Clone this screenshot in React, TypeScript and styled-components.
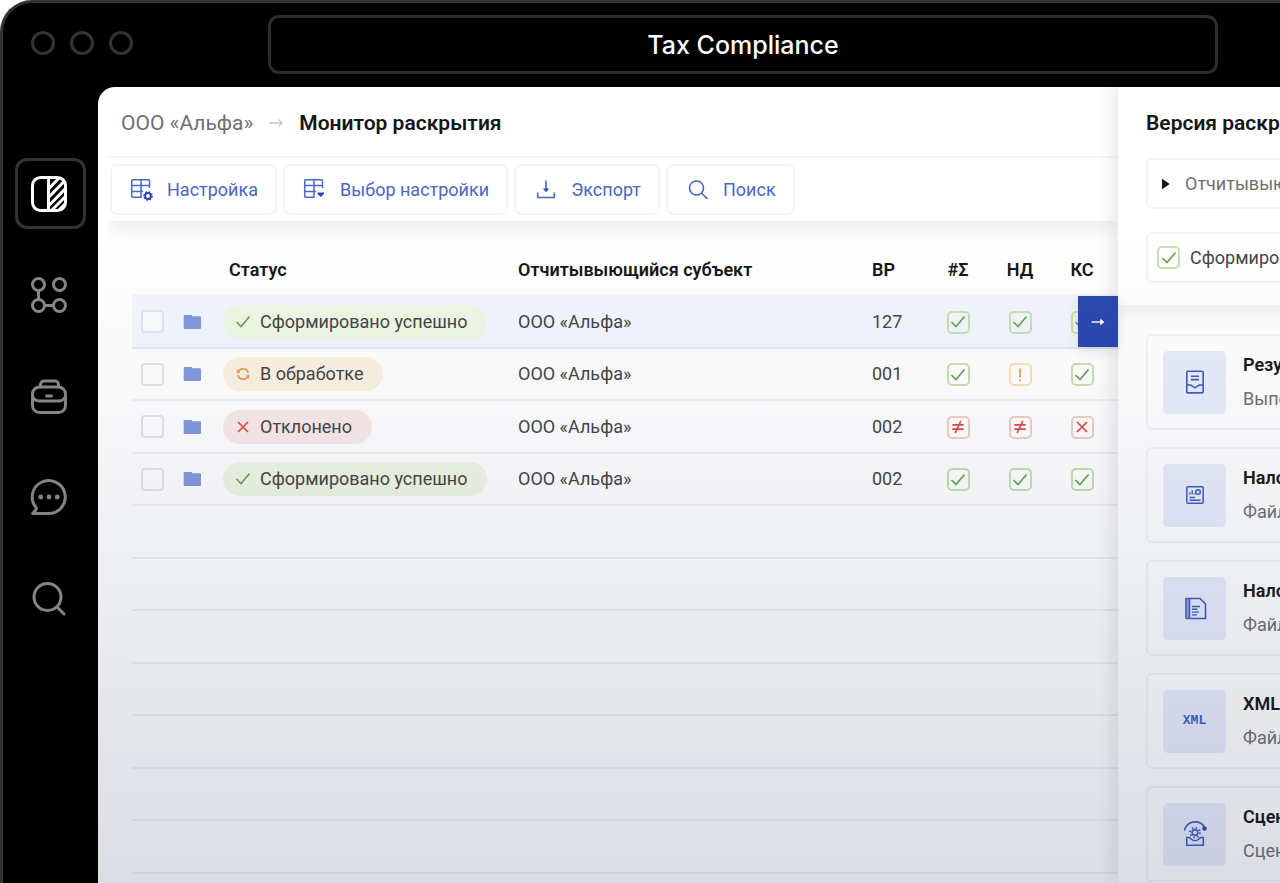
import React from 'react';
import styled, { createGlobalStyle } from 'styled-components';

const GlobalStyle = createGlobalStyle`
  *, *::before, *::after { box-sizing: border-box; }
  html, body { margin: 0; background: #fff; }
  body { font-family: Roboto, "Noto Sans", sans-serif; font-size: 18px; line-height: 24px; color: #161616; }
  button, input { font: inherit; margin: 0; }
  svg { display: block; }
`;

/* ---------- Window frame ---------- */

const Frame = styled.div`
  display: grid;
  grid-template-rows: auto minmax(0, 1fr);
  height: 100vh;
  overflow: hidden;
  background: #000;
  border: solid #333;
  border-width: 3px 0 0 3px;
  border-top-left-radius: 32px;
`;

const TitleBar = styled.header`
  display: flex;
  align-items: center;
  padding: 12px 62px 13px 28px;
`;

const WindowDots = styled.div`
  display: flex;
  gap: 15px;
  width: 237px;
  padding-bottom: 3px;
`;

const Dot = styled.span`
  width: 24px;
  height: 24px;
  border: 3px solid #333;
  border-radius: 50%;
`;

const AppTitle = styled.h1`
  flex: 1;
  margin: 0;
  height: 59px;
  display: flex;
  align-items: center;
  justify-content: center;
  border: 3px solid #2d2d2d;
  border-radius: 11px;
  font: 500 25px/32px Inter, sans-serif;
  color: #fff;
`;

const Body = styled.div`
  display: flex;
  min-height: 0;
`;

const SideNav = styled.nav`
  flex: none;
  display: flex;
  flex-direction: column;
  align-items: center;
  gap: 30px;
  width: 95px;
  padding-top: 71px;
`;

const NavButton = styled.button<{ $active?: boolean }>`
  display: grid;
  place-items: center;
  width: 71px;
  height: 71px;
  padding: 0 3px 0 0;
  border: 3px solid ${p => (p.$active ? '#333' : 'transparent')};
  border-radius: 12px;
  background: none;
  color: ${p => (p.$active ? '#fff' : '#858585')};
`;

const Screen = styled.div`
  position: relative;
  flex: 1;
  display: flex;
  min-width: 0;
  overflow: hidden;
  border-top-left-radius: 17px;
  background: #fff;
  &::after {
    content: '';
    position: absolute;
    inset: 0;
    z-index: 5;
    pointer-events: none;
    background: linear-gradient(rgba(30, 45, 85, 0) 18%, rgba(30, 45, 85, 0.035) 40%, rgba(30, 45, 85, 0.16));
  }
`;

/* ---------- Monitor ---------- */

const Main = styled.main`
  flex: 1;
  min-width: 0;
  display: flex;
  flex-direction: column;
`;

const MonitorHead = styled.div`
  margin-left: 10px;
  box-shadow: 0 8px 18px rgba(0, 0, 0, 0.08);
  clip-path: inset(0 0 -40px 0);
`;

const Crumbs = styled.div`
  display: flex;
  align-items: center;
  gap: 16px;
  height: 71px;
  padding: 2px 0 0 13px;
  border-bottom: 2px solid #f6f6f7;
  font-size: 21px;
`;

const CrumbLink = styled.a`
  color: #6f6f6f;
  text-decoration: none;
`;

const Heading = styled.h2`
  margin: 0;
  font-size: 21px;
  line-height: 24px;
  font-weight: 600;
  white-space: nowrap;
`;

const Toolbar = styled.div`
  display: flex;
  gap: 6px;
  padding: 6px 2px;
`;

const ToolButton = styled.button`
  display: flex;
  align-items: center;
  gap: 13px;
  height: 51px;
  padding: 0 17px 0 18px;
  border: 2px solid #f5f5f6;
  border-radius: 7px;
  background: #fff;
  color: #4a67c2;
  white-space: nowrap;
`;

const TableArea = styled.div`
  padding: 24px 0 0 34px;
`;

const Table = styled.table`
  width: 100%;
  table-layout: fixed;
  border-collapse: separate;
  border-spacing: 0;
`;

const Col = styled.col<{ $w?: number }>`
  width: ${p => (p.$w ? `${p.$w}px` : 'auto')};
`;

const Th = styled.th<{ $center?: boolean; $indent?: boolean }>`
  height: 51px;
  padding: 0 0 0 ${p => (p.$indent ? 6 : 0)}px;
  text-align: ${p => (p.$center ? 'center' : 'left')};
  font-weight: 600;
  white-space: nowrap;
  border-bottom: 2px solid #f6f6f8;
`;

const Row = styled.tr<{ $selected?: boolean }>`
  height: 52px;
  &:nth-child(odd) { height: 53px; }
  background: ${p => (p.$selected ? '#f3f6ff' : 'transparent')};
`;

const Td = styled.td<{ $center?: boolean }>`
  position: relative;
  height: inherit;
  padding: 0;
  text-align: ${p => (p.$center ? 'center' : 'left')};
  color: #454545;
  white-space: nowrap;
  border-bottom: 2px solid rgba(110, 115, 135, 0.1);
`;

const Check = styled.input`
  appearance: none;
  display: block;
  width: 23px;
  height: 23px;
  margin-left: 9px;
  border: 2px solid #e3e4e9;
  border-radius: 4px;
  background: rgba(255, 255, 255, 0.6);
`;

const tones = {
  ok: { pill: '#eff7e4', box: '#c6e2ae', ink: '#65a557' },
  work: { pill: '#fcf2e2', box: '#fae0b8', ink: '#e79c50' },
  bad: { pill: '#f9eae8', box: '#f5ccc2', ink: '#df4b45' },
};
type Tone = keyof typeof tones;

const Pill = styled.span<{ $tone: Tone }>`
  display: inline-flex;
  align-items: center;
  gap: 9px;
  height: 34px;
  padding: 0 20px 0 12px;
  border-radius: 17px;
  background: ${p => tones[p.$tone].pill};
  vertical-align: middle;
  svg { color: ${p => tones[p.$tone].ink}; }
`;

const Mark = styled.span<{ $tone: Tone }>`
  display: inline-grid;
  place-items: center;
  width: 23px;
  height: 23px;
  border: 2px solid ${p => tones[p.$tone].box};
  border-radius: 5px;
  color: ${p => tones[p.$tone].ink};
  vertical-align: middle;
`;

const OpenRow = styled.button`
  position: absolute;
  top: 0;
  right: 0;
  z-index: 3;
  display: grid;
  place-items: center;
  width: 40px;
  height: 51px;
  padding: 0;
  border: 0;
  background: #2a48b0;
  color: #fff;
  box-shadow: 0 4px 12px rgba(0, 0, 0, 0.1);
`;

/* ---------- Version drawer ---------- */

const Drawer = styled.aside`
  position: relative;
  z-index: 2;
  flex: none;
  width: 162px;
  background: #fff;
  box-shadow: -4px 0 18px rgba(0, 0, 0, 0.11);
`;

const DrawerClip = styled.div`
  height: 100%;
  overflow: hidden;
`;

const DrawerContent = styled.div`
  width: 420px;
`;

const DrawerHead = styled.div`
  display: grid;
  gap: 23px;
  padding: 24px 24px 22px 28px;
  box-shadow: 0 6px 20px rgba(0, 0, 0, 0.08);
`;

const Field = styled.div`
  display: flex;
  align-items: center;
  gap: 10px;
  height: 51px;
  padding: 0 9px;
  border: 2px solid #f5f5f6;
  border-radius: 6px;
  color: #454545;
  white-space: nowrap;
`;

const Disclosure = styled.button`
  display: flex;
  align-items: center;
  gap: 14px;
  height: 51px;
  padding: 0 12px;
  border: 2px solid #f5f5f6;
  border-radius: 6px;
  background: #fff;
  color: #6f6f6f;
  white-space: nowrap;
  svg { color: #161616; }
`;

const Cards = styled.div`
  display: grid;
  gap: 17px;
  padding: 29px 24px 24px 28px;
`;

const Card = styled.article`
  display: flex;
  align-items: center;
  gap: 17px;
  height: 96px;
  padding: 0 15px;
  border: 2px solid #f4f4f6;
  border-radius: 6px;
`;

const Tile = styled.div`
  display: grid;
  place-items: center;
  width: 63px;
  height: 63px;
  border-radius: 5px;
  background: #e8edfb;
  color: #3f5dc0;
`;

const XmlMark = styled.span`
  font: 700 13px/16px "Liberation Mono", monospace;
`;

const CardTitle = styled.h3`
  margin: 0 0 10px;
  font-size: 18px;
  line-height: 24px;
  font-weight: 600;
`;

const CardText = styled.p`
  margin: 0;
  color: #6f6f6f;
`;

/* ---------- Icons ---------- */

const line = { fill: 'none', stroke: 'currentColor' } as const;

const PanelIcon = () => (
  <svg width="38" height="38" viewBox="0 0 38 38" {...line} strokeWidth="3">
    <rect x="2.5" y="2.5" width="33" height="33" rx="8" />
    <path d="M18.5 2v34" />
    <path d="M19 13.5 29 3M19 22 34 6.500M19 30.500 35 14M22 35 35 22M29 35l6-6" />
  </svg>
);
const NodesIcon = () => (
  <svg width="38" height="38" viewBox="0 0 38 38" {...line} strokeWidth="3">
    <circle cx="8.500" cy="8.500" r="6" /><circle cx="29.500" cy="8.500" r="6" />
    <circle cx="8.500" cy="29.500" r="6" /><circle cx="29.500" cy="29.500" r="6" />
    <path d="M8.500 14.500v9M14.500 29.500h9" />
  </svg>
);
const CaseIcon = () => (
  <svg width="38" height="38" viewBox="0 0 38 38" {...line} strokeWidth="3" strokeLinecap="round">
    <path d="M10.500 10V7.500a3.500 3.500 0 0 1 3.500-3.500h11a3.500 3.500 0 0 1 3.500 3.500V10" />
    <rect x="2.500" y="10" width="33" height="25.500" rx="7" />
    <path d="M2.500 17.500a6 6 0 0 0 6 6.500h21a6 6 0 0 0 6-6.500M16.500 19h5" />
  </svg>
);
const ChatIcon = () => (
  <svg width="38" height="38" viewBox="0 0 38 38" {...line} strokeWidth="3" strokeLinejoin="round">
    <path d="M19 35.500A16.500 16.500 0 1 0 6 29.500c.6.800.4 1.600-.2 2.400L2.700 35.500Z" />
    <g fill="currentColor" stroke="none"><circle cx="10.700" cy="19" r="2.400" /><circle cx="19" cy="19" r="2.400" /><circle cx="27.300" cy="19" r="2.400" /></g>
  </svg>
);
const BigSearchIcon = () => (
  <svg width="38" height="38" viewBox="0 0 38 38" {...line} strokeWidth="3" strokeLinecap="round">
    <circle cx="17.500" cy="18" r="13.500" /><path d="m27 28 7 7" />
  </svg>
);
const CrumbArrow = () => (
  <svg width="14" height="10" viewBox="0 0 14 10" {...line} stroke="#c6c6c6" strokeWidth="1.300"><path d="M0 5h13M9.500 1.500 13 5 9.500 8.500" /></svg>
);
const GridBase = () => <path d="M19.500 10V2.700a1 1 0 0 0-1-1H2.700a1 1 0 0 0-1 1v15.600a1 1 0 0 0 1 1H11V1.700M1.700 7.500h17.800M1.700 13.400H13" />;
const GridGearIcon = () => (
  <svg width="24" height="24" viewBox="0 0 24 24" {...line} strokeWidth="1.500">
    <GridBase />
    <circle cx="18" cy="18" r="2.900" stroke="#2a48b0" strokeWidth="2" />
    <circle cx="18" cy="18" r="4.200" stroke="#2a48b0" strokeWidth="1.300" strokeDasharray="1.700 1.600" />
  </svg>
);
const GridDropIcon = () => (
  <svg width="24" height="24" viewBox="0 0 24 24" {...line} strokeWidth="1.500">
    <GridBase />
    <path d="M14.500 14.500h6.500v1.500L17.800 19l-3.300-3Z" fill="#2a48b0" stroke="none" />
  </svg>
);
const ExportIcon = () => (
  <svg width="24" height="24" viewBox="0 0 24 24" {...line} strokeWidth="1.600">
    <path d="M3.700 14.500v5h16.600v-5M12 2.500v10" /><path d="M8.800 10.500h6.400L12 14.300Z" fill="#2a48b0" stroke="none" />
  </svg>
);
const SearchIcon = () => (
  <svg width="24" height="24" viewBox="0 0 24 24" {...line} strokeWidth="1.600"><circle cx="10.500" cy="10" r="7" /><path d="m15.500 15 6 6" /></svg>
);
const FolderIcon = () => (
  <svg width="19" height="16" viewBox="0 0 19 16"><path d="M1.500 1h6.700l1.600 1.300h7.400A.8.8 0 0 1 18 3v11a1 1 0 0 1-1 1H1.500a.8.800 0 0 1-.8-.8V1.800a.8.800 0 0 1 .8-.8Z" fill="#8299de" /></svg>
);
const TickIcon = () => (
  <svg width="16" height="16" viewBox="0 0 16 16" {...line} strokeWidth="1.700"><path d="m1.500 8 4.500 4.500 8.500-10" /></svg>
);
const SyncIcon = () => (
  <svg width="16" height="16" viewBox="0 0 16 16" {...line} strokeWidth="1.700">
    <path d="M3 6.200A5.400 5.400 0 0 1 13.200 7M13 9.800A5.400 5.400 0 0 1 2.800 9" />
    <path d="M1.800 3v4.600l3.600-1.400ZM14.200 13V8.400l-3.600 1.400Z" fill="currentColor" stroke="none" />
  </svg>
);
const CrossIcon = () => (
  <svg width="16" height="16" viewBox="0 0 16 16" {...line} strokeWidth="1.700"><path d="m3 3 10 10M13 3 3 13" /></svg>
);
const NotEqualIcon = () => (
  <svg width="16" height="16" viewBox="0 0 16 16" {...line} strokeWidth="1.700"><path d="M2.300 5.800h11.400M2.300 10.200h11.400M10.800 2 5.200 14" /></svg>
);
const AlertIcon = () => (
  <svg width="16" height="16" viewBox="0 0 16 16" {...line} strokeWidth="1.700"><path d="M8 1.500v9M8 12.300v2" /></svg>
);
const GoArrow = () => (
  <svg width="14" height="10" viewBox="0 0 14 10" {...line} strokeWidth="1.400"><path d="M.5 5h11" /><path d="M9.300 1.500 13.300 5l-4 3.500V5Z" fill="currentColor" stroke="none" /></svg>
);
const PlayIcon = () => (
  <svg width="11" height="12" viewBox="0 0 11 12"><path d="M2 .8 9.800 6 2 11.200Z" fill="currentColor" /></svg>
);
const ReportIcon = () => (
  <svg width="24" height="26" viewBox="0 0 24 26" {...line} strokeWidth="1.600">
    <rect x="3.800" y="2.300" width="16.400" height="21.600" rx="1" />
    <path d="M8 7.300h8M8 10.600h8M4 16h3.500c1.500 0 2 2.600 4.500 2.600s3-2.600 4.500-2.600H20" />
  </svg>
);
const ChartDocIcon = () => (
  <svg width="24" height="24" viewBox="0 0 24 24" {...line} strokeWidth="1.500">
    <rect x="3.800" y="3.800" width="16.400" height="16.400" rx="1" /><circle cx="15" cy="9" r="2.300" />
    <path d="M6.800 11.500V9.500M9.300 11.500V7.500M12 11.500v-1.500M6.500 14.500h5.500M6.500 17.300h11" />
  </svg>
);
const FileIcon = () => (
  <svg width="24" height="24" viewBox="0 0 24 24" {...line} strokeWidth="1.600">
    <path d="M3 2.500h14l5.500 5.500v14.500H3.800a.8.800 0 0 1-.8-.8Z" /><path d="M4 3h2.500v19H4Z" fill="currentColor" fillOpacity=".5" stroke="none" /><path d="M6.500 2.500v20" />
    <path d="M9 10.500h8M9 13.300h5.500M9 16.100h7M9 18.900h5" strokeWidth="1.400" />
  </svg>
);
const ScenarioIcon = () => (
  <svg width="26" height="26" viewBox="0 0 26 26" {...line} strokeWidth="1.600">
    <path d="M2.500 9.500a11 11 0 0 1 20-3.500" /><circle cx="22.500" cy="7.500" r="2.200" fill="#2a48b0" stroke="none" />
    <circle cx="13" cy="11.500" r="2.900" /><circle cx="13" cy="11.500" r="5" strokeWidth="1.800" strokeDasharray="1.500 2.430" />
    <path d="M7 16.500H4.700v7.700h16.600v-7.700H19c-1.500 0-2 3.200-6 3.200s-4.500-3.200-6-3.200Z" />
  </svg>
);

/* ---------- Data ---------- */

const markIcons = { tick: <TickIcon />, cross: <CrossIcon />, neq: <NotEqualIcon />, alert: <AlertIcon /> };
const markTone: Record<keyof typeof markIcons, Tone> = { tick: 'ok', cross: 'bad', neq: 'bad', alert: 'work' };
const pillIcons: Record<Tone, React.ReactNode> = { ok: <TickIcon />, work: <SyncIcon />, bad: <CrossIcon /> };

type Entry = { status: string; tone: Tone; code: string; marks: (keyof typeof markIcons)[] };

const entries: Entry[] = [
  { status: 'Сформировано успешно', tone: 'ok', code: '127', marks: ['tick', 'tick', 'tick'] },
  { status: 'В обработке', tone: 'work', code: '001', marks: ['tick', 'alert', 'tick'] },
  { status: 'Отклонено', tone: 'bad', code: '002', marks: ['neq', 'neq', 'cross'] },
  { status: 'Сформировано успешно', tone: 'ok', code: '002', marks: ['tick', 'tick', 'tick'] },
];
const blankRows = Array.from({ length: 8 }, (_, i) => i);

const navItems = [
  { label: 'Панель', icon: <PanelIcon /> },
  { label: 'Процессы', icon: <NodesIcon /> },
  { label: 'Портфель', icon: <CaseIcon /> },
  { label: 'Сообщения', icon: <ChatIcon /> },
  { label: 'Поиск', icon: <BigSearchIcon /> },
];

const tools = [
  { label: 'Настройка', icon: <GridGearIcon /> },
  { label: 'Выбор настройки', icon: <GridDropIcon /> },
  { label: 'Экспорт', icon: <ExportIcon /> },
  { label: 'Поиск', icon: <SearchIcon /> },
];

const cards = [
  { title: 'Результат', text: 'Выполнено', icon: <ReportIcon /> },
  { title: 'Налоговый', text: 'Файл', icon: <ChartDocIcon /> },
  { title: 'Налоговая', text: 'Файл', icon: <FileIcon /> },
  { title: 'XML-файл', text: 'Файл', icon: <XmlMark>XML</XmlMark> },
  { title: 'Сценарий', text: 'Сценарий', icon: <ScenarioIcon /> },
];

export default function App() {
  return (
    <>
      <GlobalStyle />
      <Frame>
        <TitleBar>
          <WindowDots><Dot /><Dot /><Dot /></WindowDots>
          <AppTitle>Tax Compliance</AppTitle>
        </TitleBar>
        <Body>
          <SideNav>
            {navItems.map((item, i) => (
              <NavButton key={item.label} $active={i === 0} aria-label={item.label}>{item.icon}</NavButton>
            ))}
          </SideNav>
          <Screen>
            <Main>
              <MonitorHead>
                <Crumbs>
                  <CrumbLink href="#alpha">ООО «Альфа»</CrumbLink>
                  <CrumbArrow />
                  <Heading>Монитор раскрытия</Heading>
                </Crumbs>
                <Toolbar>
                  {tools.map(t => <ToolButton key={t.label}>{t.icon}{t.label}</ToolButton>)}
                </Toolbar>
              </MonitorHead>
              <TableArea>
                <Table>
                  <colgroup>
                    <Col $w={51} /><Col $w={40} /><Col $w={295} /><Col /><Col $w={55} /><Col $w={62} /><Col $w={62} /><Col $w={62} /><Col $w={5} />
                  </colgroup>
                  <thead>
                    <tr>
                      <Th /><Th />
                      <Th $indent>Статус</Th>
                      <Th>Отчитывыющийся субъект</Th>
                      <Th>ВР</Th>
                      <Th $center>#Σ</Th>
                      <Th $center>НД</Th>
                      <Th $center>КС</Th>
                      <Th />
                    </tr>
                  </thead>
                  <tbody>
                    {entries.map((e, i) => (
                      <Row key={i} $selected={i === 0}>
                        <Td><Check type="checkbox" aria-label={`Выбрать строку ${i + 1}`} /></Td>
                        <Td><FolderIcon /></Td>
                        <Td><Pill $tone={e.tone}>{pillIcons[e.tone]}{e.status}</Pill></Td>
                        <Td>ООО «Альфа»</Td>
                        <Td>{e.code}</Td>
                        {e.marks.map((m, k) => <Td key={k} $center><Mark $tone={markTone[m]}>{markIcons[m]}</Mark></Td>)}
                        <Td>{i === 0 && <OpenRow aria-label="Открыть"><GoArrow /></OpenRow>}</Td>
                      </Row>
                    ))}
                    {blankRows.map(i => <Row key={`blank-${i}`}><Td colSpan={9} /></Row>)}
                  </tbody>
                </Table>
              </TableArea>
            </Main>
            <Drawer>
              <DrawerClip>
                <DrawerContent>
                  <DrawerHead>
                    <Heading>Версия раскрытия</Heading>
                    <Disclosure><PlayIcon />Отчитывыющийся субъект</Disclosure>
                    <Field><Mark $tone="ok"><TickIcon /></Mark>Сформировано успешно</Field>
                  </DrawerHead>
                  <Cards>
                    {cards.map((c, i) => (
                      <Card key={i}>
                        <Tile>{c.icon}</Tile>
                        <div><CardTitle>{c.title}</CardTitle><CardText>{c.text}</CardText></div>
                      </Card>
                    ))}
                  </Cards>
                </DrawerContent>
              </DrawerClip>
            </Drawer>
          </Screen>
        </Body>
      </Frame>
    </>
  );
}
